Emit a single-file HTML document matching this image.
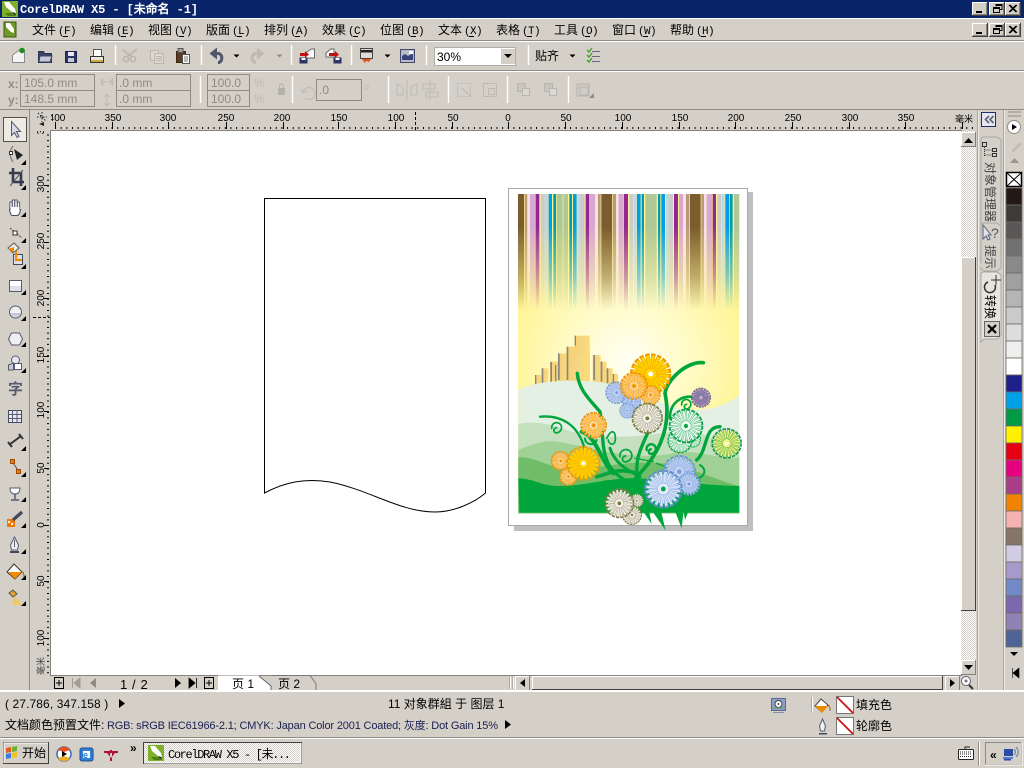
<!DOCTYPE html>
<html><head><meta charset="utf-8"><title>CorelDRAW X5</title>
<style>
html,body{margin:0;padding:0;width:1024px;height:768px;overflow:hidden;background:#d4d0c8}
svg{position:absolute;left:0;top:0;display:block}
text{font-family:"Liberation Sans","WenQuanYi Zen Hei","Noto Sans CJK SC",sans-serif;font-size:12px;fill:#000}
.m{font-family:"Liberation Mono","WenQuanYi Zen Hei",monospace;font-size:11px;letter-spacing:-.6px}
.t{font-family:"Liberation Mono","WenQuanYi Zen Hei",monospace;font-size:12px;font-weight:bold;fill:#fff}
.r{font-size:10px;text-anchor:middle}
.g{fill:#8f8c85;font-size:12px}
.fl-o{--p:#ffc04a;--e:#ee8e0c;--c:#f08a00;--g:#fff6e0}
.fl-y{--p:#ffd400;--e:#f09c00;--c:#fff;--g:#ffd400}
.fl-b{--p:#b4c9f0;--e:#7297d6;--c:#7d9ad8;--g:#dfe8fa}
.fl-l{--p:#d6e4fb;--e:#6690d0;--c:#00a040;--g:#f2f6ff}
.fl-t{--p:#f4ece6;--e:#7c7c4a;--c:#6d7a3a;--g:#fff}
.fl-p{--p:#9c8bb4;--e:#66588a;--c:#cfc6dc;--g:#9c8bb4}
.fl-g{--p:#eefaf0;--e:#0aa34a;--c:#0aa34a;--g:#fff}
.fl-v{--p:#f2f07a;--e:#129a48;--c:#fff;--g:#f2f07a}
</style></head><body>
<svg width="1024" height="768" viewBox="0 0 1024 768" xmlns="http://www.w3.org/2000/svg">
<defs>
<pattern id="ck" width="2" height="2" patternUnits="userSpaceOnUse"><rect width="2" height="2" fill="#fff"/><rect width="1" height="1" fill="#d4d0c8"/><rect x="1" y="1" width="1" height="1" fill="#d4d0c8"/></pattern>
<g id="wb"><rect width="16" height="14" fill="#404040"/><rect width="15" height="13" fill="#fff"/><rect x="1" y="1" width="14" height="12" fill="#808080"/><rect x="1" y="1" width="13" height="11" fill="#d4d0c8"/></g>
<g id="b15"><rect width="15" height="15" fill="#808080"/><rect width="14" height="14" fill="#fff"/><rect x="1" y="1" width="13" height="13" fill="#d4d0c8"/></g>
<path id="tr" d="M5 0V5H0Z" fill="#000"/>
<g id="logo"><rect width="16" height="16" fill="#7fb02c"/><path d="M2 1h5l6 7 1 4-4-1-6-5z" fill="#fff"/><path d="M3 12l3 3h8v-3z" fill="#4f7f16"/><path d="M10 11l3 1 0 2z" fill="#222"/></g>
<radialGradient id="sky" gradientUnits="userSpaceOnUse" cx="628" cy="360" r="130"><stop offset="0" stop-color="#fffff4"/><stop offset=".45" stop-color="#fffbc8"/><stop offset="1" stop-color="#fff38e"/></radialGradient>
<linearGradient id="fade" gradientUnits="userSpaceOnUse" x1="0" y1="194" x2="0" y2="310"><stop offset="0" stop-color="#fff"/><stop offset=".28" stop-color="#fff"/><stop offset=".72" stop-color="#777"/><stop offset="1" stop-color="#000"/></linearGradient>
<mask id="fm" maskUnits="userSpaceOnUse" x="500" y="180" width="260" height="140"><rect x="500" y="180" width="260" height="140" fill="url(#fade)"/></mask>
<linearGradient id="bld" x1="0" x2="1" y1="0" y2="0"><stop offset="0" stop-color="#f6d170"/><stop offset=".5" stop-color="#f3d688"/><stop offset="1" stop-color="#ffdd70"/></linearGradient>
<g id="fl">
<circle r="38" style="fill:var(--g)"/>
<circle r="32" fill="none" stroke-width="36" pathLength="100" stroke-dasharray="3.8 1.2" style="stroke:var(--e)"/>
<circle r="30" fill="none" stroke-width="29" pathLength="100" stroke-dasharray="2.6 2.4" stroke-dashoffset="-.6" style="stroke:var(--p)"/>
<circle r="11" style="fill:var(--p)"/>
<circle r="6" style="fill:var(--c)"/>
</g>
<clipPath id="art"><rect x="500" y="180" width="260" height="360"/></clipPath>
<clipPath id="vr"><rect x="30" y="131" width="21" height="544"/></clipPath>
<clipPath id="hr"><rect x="51" y="110" width="925" height="21"/></clipPath>
</defs>

<!-- background -->
<rect width="1024" height="768" fill="#d4d0c8"/>

<!-- title bar -->
<rect width="1024" height="18" fill="#0a246a"/>
<use href="#logo" x="2" y="1"/>
<text class="t" x="20" y="13" textLength="178">CorelDRAW X5 - [未命名 -1]</text>
<use href="#wb" x="972" y="2"/><use href="#wb" x="989" y="2"/><use href="#wb" x="1005" y="2"/>
<use href="#wb" x="972" y="23"/><use href="#wb" x="989" y="23"/><use href="#wb" x="1005" y="23"/>
<g fill="none" stroke="#000">
<path d="M976 11.5h6M976 12.5h6M976 32.5h6M976 33.5h6"/>
<path d="M996 6.5v-2h6v5h-2M996 5.5h6M993.5 7.5h6v5h-6zM993.5 8.5h6"/>
<path d="M996 27.5v-2h6v5h-2M996 26.5h6M993.5 28.5h6v5h-6zM993.5 29.5h6"/>
<path d="M1009 5l7 7M1010 5l7 7M1016 5l-7 7M1017 5l-7 7"/>
<path d="M1009 26l7 7M1010 26l7 7M1016 26l-7 7M1017 26l-7 7"/>
</g>
<rect y="18" width="1024" height="1" fill="#fff"/>

<!-- menu -->
<g transform="translate(4,22)"><rect width="12" height="15" fill="#6f9a2a" stroke="#3c5a14"/><path d="M2 1h4l4 6 0 4-3-1-5-5z" fill="#fff"/></g>
<g>
<text x="32" y="34">文件<tspan class="m" x="58">(F)</tspan></text>
<text x="90" y="34">编辑<tspan class="m" x="116">(E)</tspan></text>
<text x="148" y="34">视图<tspan class="m" x="174">(V)</tspan></text>
<text x="206" y="34">版面<tspan class="m" x="232">(L)</tspan></text>
<text x="264" y="34">排列<tspan class="m" x="290">(A)</tspan></text>
<text x="322" y="34">效果<tspan class="m" x="348">(C)</tspan></text>
<text x="380" y="34">位图<tspan class="m" x="406">(B)</tspan></text>
<text x="438" y="34">文本<tspan class="m" x="464">(X)</tspan></text>
<text x="496" y="34">表格<tspan class="m" x="522">(T)</tspan></text>
<text x="554" y="34">工具<tspan class="m" x="580">(O)</tspan></text>
<text x="612" y="34">窗口<tspan class="m" x="638">(W)</tspan></text>
<text x="670" y="34">帮助<tspan class="m" x="696">(H)</tspan></text>
</g>
<path d="M63 36.500h5M121 36.500h5M179 36.500h5M237 36.500h5M295 36.500h5M353 36.500h5M411 36.500h5M469 36.500h5M527 36.500h5M585 36.500h5M643 36.500h5M701 36.500h5" stroke="#000"/>
<rect y="40" width="1024" height="1" fill="#8e8b84"/><rect y="41" width="1024" height="1" fill="#fff"/>
<rect y="70" width="1024" height="1" fill="#8e8b84"/><rect y="71" width="1024" height="1" fill="#fff"/>
<rect y="109" width="1024" height="1" fill="#8e8b84"/>

<!-- toolbar separators -->
<path d="M115.500 45v20M201.500 45v20M291.500 45v20M351.500 45v20M426.500 45v20M528.500 45v20" stroke="#fff" stroke-width="1.400"/>
<path d="M200.500 76v27M292.500 76v27M388.500 76v27M448.500 76v27M507.500 76v27M568.500 76v27" stroke="#fff" stroke-width="1.400"/>

<!-- main toolbar icons -->
<path d="M12.500 55l7-5h5v12.500h-12z" fill="#f4f4f4" stroke="#8a8a8a"/><circle cx="22" cy="50.500" r="2.800" fill="#1f8f1f"/>
<path d="M38.500 51.500h5l1 2h7v9h-13z" fill="#3d4468" stroke="#2c3252"/><path d="M40 56h12l-2 6h-11z" fill="#c6cad8" stroke="#3d4468"/>
<rect x="65.500" y="51.500" width="11" height="11" fill="#2c3468" stroke="#20254c"/><rect x="68" y="52" width="6" height="4" fill="#e8e8f0"/><rect x="68" y="58" width="6" height="4" fill="#c8cad8"/>
<rect x="93.500" y="49.500" width="8" height="7" fill="#fff" stroke="#555"/><rect x="90.500" y="56.500" width="13" height="6" fill="#e8e4d8" stroke="#333"/><rect x="91" y="60" width="12" height="2" fill="#c9a940"/>
<g stroke="#b8b4ac" fill="none" stroke-width="1.500"><circle cx="126" cy="59" r="2.600"/><circle cx="133" cy="59" r="2.600"/><path d="M127 57l10-8M132 57l-9-7"/></g>
<g stroke="#bbb7af" fill="#dcd9d2"><rect x="150.500" y="50.500" width="8" height="10"/><rect x="154.500" y="53.500" width="9" height="10"/></g>
<path d="M156 56.500h6M156 58.500h6M156 60.500h6" stroke="#bbb7af"/>
<rect x="176.500" y="51.500" width="9" height="11" fill="#5b3c22" stroke="#3a2712"/><rect x="178" y="48.500" width="5" height="4" fill="#9aa0a0" stroke="#555"/><rect x="182.500" y="54.500" width="7" height="9" fill="#fff" stroke="#555"/><path d="M184 57h4M184 59h4M184 61h4" stroke="#777"/>
<path d="M216 53.500h3a5 5 0 0 1 0 9h-1" fill="none" stroke="#50566c" stroke-width="3"/><path d="M217 47.500v12l-7.500-6z" fill="#50566c"/>
<path d="M233.500 54.500h6l-3 3z" fill="#000"/>
<path d="M258 53.500h-3a5 5 0 0 0 0 9h1" fill="none" stroke="#bdbab3" stroke-width="3"/><path d="M257 47.500v12l7.500-6z" fill="#bdbab3"/>
<path d="M276.500 54.500h6l-3 3z" fill="#8f8c85"/>
<!-- import / export -->
<path d="M305.500 53l6-4h3v9h-9z" fill="#fff" stroke="#666"/><rect x="299.500" y="57.500" width="8" height="6" fill="#2c3468"/><rect x="301.500" y="58" width="4" height="2" fill="#fff"/><path d="M300 53h5v-2l4 3.500-4 3.500v-2h-5z" fill="#c21010"/>
<path d="M326 53l5-4h3v8h-8z" fill="#fff" stroke="#666"/><rect x="333.500" y="57.500" width="8" height="6" fill="#2c3468"/><rect x="335.500" y="58" width="4" height="2" fill="#fff"/><path d="M329 53h6v-2l4 3.500-4 3.500v-2h-6z" fill="#c21010"/>
<rect x="360.500" y="48.500" width="12" height="10" fill="#dfdcd4" stroke="#444"/><rect x="361" y="50" width="11" height="2.500" fill="#222"/><path d="M362 59h9l-2 3-2.500-1-2 2-1-2z" fill="#e8501a"/>
<path d="M384.500 54.500h6l-3 3z" fill="#000"/>
<rect x="400.500" y="49.500" width="14" height="13" fill="#b8bcc8" stroke="#404868"/><path d="M402 60v-4l3-2 3 2 5-3v7z" fill="#39437a"/><rect x="409" y="51" width="4" height="3" fill="#fff"/>
<!-- combo -->
<rect x="434.500" y="47.500" width="81" height="18" fill="#fff" stroke="#b0ada5"/>
<text x="437" y="61" font-size="12">30%</text>
<rect x="501" y="49" width="14" height="15" fill="#d4d0c8"/><path d="M504 54h8l-4 4z" fill="#000"/>
<text x="535" y="60" font-size="12">贴齐</text>
<path d="M569.500 54.500h6l-3 3z" fill="#000"/>
<path d="M592 51.500h8M592 56.500h8M592 61.500h8" stroke="#6a6688"/><path d="M587 50l2 2 3-4M587 55l2 2 3-4M587 60l2 2 3-4" fill="none" stroke="#3aa020" stroke-width="1.300"/>

<!-- property bar -->
<text x="8" y="88" font-weight="bold" class="g">x:</text><text x="8" y="104" font-weight="bold" class="g">y:</text>
<g fill="none" stroke="#8e8b84"><rect x="20.500" y="74.500" width="74" height="16"/><rect x="20.500" y="90.500" width="74" height="16"/><rect x="116.500" y="74.500" width="74" height="16"/><rect x="116.500" y="90.500" width="74" height="16"/><rect x="207.500" y="74.500" width="42" height="16"/><rect x="207.500" y="90.500" width="42" height="16"/><rect x="316.500" y="79.500" width="45" height="21"/></g>
<text x="24" y="87" class="g">105.0 mm</text><text x="24" y="103" class="g">148.5 mm</text>
<text x="119" y="87" class="g">.0 mm</text><text x="119" y="103" class="g">.0 mm</text>
<text x="211" y="87" class="g">100.0</text><text x="211" y="103" class="g">100.0</text>
<text x="319" y="94" class="g">.0</text>
<text x="254" y="87" style="fill:#bdbab3">%</text><text x="254" y="103" style="fill:#bdbab3">%</text>
<text x="364" y="90" style="fill:#bdbab3;font-size:9px">o</text>
<g fill="none" stroke="#bdbab3">
<path d="M102 82h10M104 79l-3 3 3 3M110 79l3 3-3 3M101.500 78v8M112.500 78v8"/>
<path d="M107 95v10M104 97l3-3 3 3M104 103l3 3 3-3"/>
<path d="M303 93a6 6 0 1 1 2 5M301 89l2 4 4-2"/>
<path d="M397 84v11h6v-8zM417 84v11h-6v-8zM407 80v20"/>
<path d="M423 84h12v5h-12zM426 92h12v5h-12zM430 80v20"/>
<rect x="457.500" y="83.500" width="13" height="13" stroke-dasharray="2 1"/><path d="M462 88l8 8"/>
<rect x="483.500" y="83.500" width="13" height="13"/><rect x="488.500" y="88.500" width="6" height="6"/>
</g>
<rect x="278" y="88" width="7" height="7" fill="#b5b2ab"/><path d="M279.500 88v-2a2 2 0 0 1 4 0v2" fill="none" stroke="#b5b2ab"/>
<g fill="#c9c6bf" stroke="#b8b5ae"><rect x="517.500" y="83.500" width="8" height="8"/><rect x="522.500" y="88.500" width="7" height="7" fill="#dcd9d2"/><rect x="544.500" y="83.500" width="8" height="8"/><rect x="549.500" y="88.500" width="7" height="7" fill="#dcd9d2"/></g>
<path d="M577 84h12v12h-12zM580 87h8v8h-8z" fill="#cfccc5" stroke="#b8b5ae"/><path d="M594 98h-5l5-5z" fill="#8e8b84"/>

<!-- ruler h -->
<rect x="30" y="110" width="946" height="21" fill="#d4d0c8"/>
<path d="M55 128H973" stroke="#000" stroke-width="2" stroke-dasharray="1 4.66"/>
<path d="M55.500 122v7M112.500 122v7M168.500 122v7M226.500 122v7M283.500 122v7M338.500 122v7M395.500 122v7M452.500 122v7M508.500 122v7M565.500 122v7M622.500 122v7M679.500 122v7M735.500 122v7M792.500 122v7M849.500 122v7M905.500 122v7M962.500 122v7" stroke="#000"/>
<path d="M415.500 112v18" stroke="#000" stroke-dasharray="3 2"/>
<g clip-path="url(#hr)">
<text class="r" x="57" y="121">400</text><text class="r" x="113" y="121">350</text><text class="r" x="168" y="121">300</text><text class="r" x="226" y="121">250</text><text class="r" x="282" y="121">200</text><text class="r" x="339" y="121">150</text><text class="r" x="396" y="121">100</text><text class="r" x="453" y="121">50</text><text class="r" x="508" y="121">0</text>
<text class="r" x="566" y="121">50</text><text class="r" x="623" y="121">100</text><text class="r" x="680" y="121">150</text><text class="r" x="736" y="121">200</text><text class="r" x="793" y="121">250</text><text class="r" x="850" y="121">300</text><text class="r" x="906" y="121">350</text>
<text x="955" y="122" style="font-size:9px">毫米</text>
</g>
<path d="M37 117h10M42 112v10M38 113l8 8" stroke="#222" stroke-dasharray="1.500 1.500" fill="none"/><path d="M39 124l5-2v4z" fill="#222"/>

<!-- ruler v -->
<g clip-path="url(#vr)">
<path d="M48 134.500V675" stroke="#000" stroke-width="2" stroke-dasharray="1 4.66"/>
<path d="M44 185.500h5M44 242.500h5M44 298.500h5M44 356.500h5M44 411.500h5M44 468.500h5M44 525.500h5M44 581.500h5M44 638.500h5" stroke="#000"/>
<g>
<text class="r" transform="translate(44,126) rotate(-90)">350</text>
<text class="r" transform="translate(44,184) rotate(-90)">300</text>
<text class="r" transform="translate(44,241) rotate(-90)">250</text>
<text class="r" transform="translate(44,298) rotate(-90)">200</text>
<text class="r" transform="translate(44,355) rotate(-90)">150</text>
<text class="r" transform="translate(44,410) rotate(-90)">100</text>
<text class="r" transform="translate(44,468) rotate(-90)">50</text>
<text class="r" transform="translate(44,525) rotate(-90)">0</text>
<text class="r" transform="translate(44,581) rotate(-90)">50</text>
<text class="r" transform="translate(44,638) rotate(-90)">100</text>
<text transform="translate(44,675) rotate(-90)" style="font-size:9px;fill:#444">毫米</text>
</g>
</g>
<path d="M33 317.500H50" stroke="#000" stroke-dasharray="3 2"/>

<!-- canvas -->
<rect x="50.500" y="130.500" width="911" height="545" fill="#fff" stroke="#85827b"/>

<!-- toolbox -->
<rect x="29" y="110" width="1" height="580" fill="#8e8b84"/>
<rect x="3.500" y="117.500" width="23" height="24" fill="#eeebe4" stroke="#55524c"/>
<path d="M11.500 121.500l0 14 3-3 2.500 5 2-1-2.500-5h4z" fill="#d8dce8" stroke="#555a70"/>
<!-- shape -->
<path d="M13 146c-4 5-4 10 0 16" fill="none" stroke="#777" stroke-width="1.200"/><rect x="9.500" y="151.500" width="3" height="3" fill="#fff" stroke="#333"/><path d="M14 149l9 6-6 5z" fill="#222"/>
<use href="#tr" x="21" y="160"/>
<!-- crop -->
<path d="M9 173h12v13M13 168v14h11" fill="none" stroke="#343a50" stroke-width="2.600"/><path d="M10 186l13-16" stroke="#555" stroke-width="1"/>
<use href="#tr" x="21" y="185"/>
<!-- hand -->
<path d="M11 208v-5M13.500 207v-6M16 207v-6M18.500 208v-5" stroke="#444a5e" stroke-width="3.200" stroke-linecap="round" fill="none"/>
<path d="M9.500 209.500h11l-1 4q-1 2-3 2h-4q-2 0-3-6z" fill="#fff" stroke="#444a5e"/>
<path d="M11 208v-5M13.500 207v-6M16 207v-6M18.500 208v-5" stroke="#fff" stroke-width="1.400" stroke-linecap="round" fill="none"/><rect x="10.500" y="207" width="9" height="4" fill="#fff"/>
<use href="#tr" x="21" y="212"/>
<!-- curve -->
<path d="M10 228l12 10" stroke="#444" stroke-dasharray="2 1"/><rect x="13" y="231" width="4" height="4" fill="#fff" stroke="#333"/>
<use href="#tr" x="21" y="238"/>
<!-- smart fill -->
<path d="M8 248l6-5 5 5-6 5z" fill="#eee" stroke="#555"/><path d="M8 249l6-2 0 6z" fill="#f08a00"/><rect x="13.500" y="254.500" width="9" height="10" fill="#e0e0e8" stroke="#444a5e"/><path d="M16 251v9h6" fill="none" stroke="#f08a00" stroke-width="2"/>
<use href="#tr" x="21" y="264"/>
<!-- rect -->
<rect x="9.500" y="280.500" width="12" height="11" fill="#dfe1ea" stroke="#555a70"/><rect x="10" y="281" width="11" height="5" fill="#fff"/>
<use href="#tr" x="21" y="290"/>
<!-- ellipse -->
<circle cx="15.500" cy="312" r="6" fill="#f0f1f5" stroke="#555a70"/><path d="M10 313a6 6 0 0 0 11 0z" fill="#c8cad8"/>
<use href="#tr" x="21" y="316"/>
<!-- polygon -->
<path d="M11.500 333h8l3 6-3 6h-8l-3-6z" fill="#eeeff4" stroke="#555a70"/>
<use href="#tr" x="21" y="342"/>
<!-- basic shapes -->
<circle cx="15.500" cy="360" r="4" fill="#e8e9f0" stroke="#555a70"/><rect x="14.500" y="363.500" width="7" height="6" fill="#fff" stroke="#555a70"/><path d="M8.500 365l5-2v7h-5z" fill="#c8cad8" stroke="#555a70"/>
<use href="#tr" x="21" y="368"/>
<!-- text -->
<text x="8" y="394" style="font-size:15px;font-weight:bold;fill:#555a70">字</text>
<!-- table -->
<rect x="8.500" y="410.500" width="13" height="12" fill="#e8e8f4" stroke="#444a5e"/><path d="M8.500 414.500h13M8.500 418.500h13M12.500 410v12M17 410v12" stroke="#555a70"/>
<!-- dimension -->
<path d="M9 445l12-9" stroke="#333" stroke-width="2"/><path d="M8 442l4 5M19 434l4 5" stroke="#333" stroke-width="2"/>
<use href="#tr" x="21" y="446"/>
<!-- connector -->
<rect x="10.500" y="459.500" width="4" height="4" fill="#f07a00" stroke="#a04a00"/><rect x="16.500" y="469.500" width="4" height="4" fill="#f07a00" stroke="#a04a00"/><path d="M13 463l5 7" stroke="#555"/>
<use href="#tr" x="21" y="472"/>
<!-- blend -->
<path d="M10 488h10c0 4-2 6-5 6s-5-2-5-6z" fill="#fff" stroke="#555a70"/><path d="M15 494v5M11 500h8" stroke="#555a70" stroke-width="1.500"/>
<use href="#tr" x="21" y="497"/>
<!-- eyedropper -->
<rect x="7" y="519" width="8" height="8" fill="#f07a00"/><path d="M8 521h2v2h-2zM11 523h2v2h-2z" fill="#fff"/><path d="M13 520l9-8" stroke="#444a5e" stroke-width="3.200"/>
<use href="#tr" x="21" y="523"/>
<!-- pen -->
<path d="M14.500 537l4 8-1 5h-6l-1-5z" fill="#f0f0f4" stroke="#555a70"/><path d="M14.500 540v7" stroke="#555a70"/><rect x="10" y="551" width="9" height="2" fill="#444a5e"/>
<use href="#tr" x="21" y="549"/>
<!-- fill -->
<path d="M7 572l7-8 8 8-7 7z" fill="#fff" stroke="#333"/><path d="M8 572l14 0-7 7z" fill="#f08a00"/><path d="M21 571c3 1 3 4 3 6" fill="none" stroke="#a06000"/>
<use href="#tr" x="21" y="575"/>
<!-- interactive -->
<path d="M9 593l4-3 4 4-4 3z" fill="#f0a030" stroke="#555"/><path d="M15 596l7 9h-10z" fill="#f2c860"/>
<use href="#tr" x="21" y="601"/>

<!-- page outline shape -->
<path d="M264.500 198.500H485.500V493C475 502 455 512 435 512C400 512 370 490 330 482C305 478 285 482 264.500 493Z" fill="#fff" stroke="#000"/>

<!-- artwork page -->
<rect x="514" y="192" width="239" height="339" fill="#bfbfbf"/>
<rect x="508.500" y="188.500" width="239" height="337" fill="#fff" stroke="#a8a8a8"/>
<rect x="518" y="194" width="221" height="318" fill="url(#sky)"/>
<!-- stripes -->
<g mask="url(#fm)"><g transform="translate(500,180) scale(.3333)">
<g fill="#7b5c2e"><rect x="54" y="42" width="18" height="360"/><rect x="304" y="42" width="32" height="360"/><rect x="570" y="42" width="32" height="360"/></g>
<g fill="#b8997a"><rect x="74" y="42" width="8" height="360"/><rect x="294" y="42" width="8" height="360"/><rect x="338" y="42" width="10" height="360"/><rect x="558" y="42" width="10" height="360"/><rect x="604" y="42" width="8" height="360"/></g>
<g fill="#f7dfe8"><rect x="82" y="42" width="8" height="360"/><rect x="286" y="42" width="8" height="360"/><rect x="348" y="42" width="8" height="360"/><rect x="549" y="42" width="9" height="360"/><rect x="612" y="42" width="8" height="360"/></g>
<g fill="#d9a8d0"><rect x="90" y="42" width="16" height="360"/><rect x="270" y="42" width="15" height="360"/><rect x="356" y="42" width="15" height="360"/><rect x="537" y="42" width="12" height="360"/><rect x="620" y="42" width="16" height="360"/></g>
<g fill="#92288f"><rect x="107" y="42" width="11" height="360"/><rect x="257" y="42" width="11" height="360"/><rect x="372" y="42" width="12" height="360"/><rect x="522" y="42" width="12" height="360"/><rect x="638" y="42" width="10" height="360"/></g>
<g fill="#cbcbcb"><rect x="122" y="42" width="12" height="360"/><rect x="240" y="42" width="14" height="360"/><rect x="388" y="42" width="12" height="360"/><rect x="506" y="42" width="13" height="360"/><rect x="652" y="42" width="12" height="360"/></g>
<g fill="#bcd8e4"><rect x="134" y="42" width="11" height="360"/><rect x="232" y="42" width="8" height="360"/><rect x="402" y="42" width="8" height="360"/><rect x="498" y="42" width="8" height="360"/><rect x="666" y="42" width="8" height="360"/></g>
<g fill="#009fe3"><rect x="146" y="42" width="10" height="360"/><rect x="219" y="42" width="11" height="360"/><rect x="411" y="42" width="11" height="360"/><rect x="484" y="42" width="11" height="360"/><rect x="676" y="42" width="12" height="360"/></g>
<g fill="#0099b4"><rect x="160" y="42" width="8" height="360"/><rect x="208" y="42" width="8" height="360"/><rect x="425" y="42" width="7" height="360"/><rect x="474" y="42" width="7" height="360"/><rect x="690" y="42" width="8" height="360"/></g>
<g fill="#afc896"><rect x="170" y="42" width="18" height="360"/><rect x="190" y="42" width="14" height="360"/><rect x="436" y="42" width="34" height="360"/><rect x="702" y="42" width="16" height="360"/></g>
</g></g>

<!-- lower art -->
<g clip-path="url(#art)"><g transform="translate(500,350) scale(.3333)">
<!-- city -->
<g fill="url(#bld)">
<rect x="105" y="75" width="20" height="30"/><rect x="125" y="55" width="20" height="50"/><rect x="150" y="35" width="25" height="70"/><rect x="175" y="10" width="28" height="95"/><rect x="200" y="-10" width="70" height="115"/><rect x="278" y="15" width="24" height="90"/><rect x="302" y="35" width="18" height="70"/><rect x="320" y="55" width="18" height="50"/><rect x="338" y="72" width="16" height="33"/>
</g>
<rect x="224" y="-43" width="45" height="60" fill="url(#bld)"/>
<g fill="#8a857a"><rect x="105" y="75" width="4" height="28"/><rect x="125" y="55" width="5" height="48"/><rect x="151" y="36" width="5" height="60"/><rect x="165" y="45" width="4" height="50"/><rect x="174" y="10" width="5" height="80"/><rect x="200" y="-10" width="5" height="100"/><rect x="224" y="-43" width="4" height="30"/><rect x="280" y="15" width="5" height="75"/><rect x="302" y="35" width="5" height="60"/><rect x="320" y="55" width="5" height="45"/><rect x="338" y="72" width="4" height="28"/></g>
<!-- hills -->
<path d="M55 118C120 90 230 85 320 100C430 122 500 185 600 180C650 175 690 160 718 135V490H55Z" fill="#e4f0e4"/>
<path d="M55 222C100 212 150 222 200 240C300 272 420 260 520 245C610 232 670 290 718 290V490H55Z" fill="#c4e0be"/>
<path d="M55 300C100 282 130 270 170 275C270 290 390 335 520 310C600 295 670 335 718 322V490H55Z" fill="#a0d196"/>
<path d="M55 322C100 318 140 350 200 356C290 360 350 335 450 338C560 340 640 390 718 408V490H55Z" fill="#6fbd68"/>
<path d="M55 385C100 385 120 408 180 408C260 408 340 380 420 385C520 392 600 405 718 408V488H58Z" fill="#00a63c"/>
<!-- stems -->
<g fill="none" stroke="#00a63c" stroke-linecap="round">
<path d="M232 70C236 120 270 150 300 185C312 240 300 300 330 350C350 380 390 400 420 420" stroke-width="10"/>
<path d="M120 200C180 195 235 220 255 300" stroke-width="7"/>
<path d="M245 245C290 260 300 330 340 370" stroke-width="12"/>
<path d="M610 38C560 33 500 90 495 130C512 210 495 290 420 370C405 385 400 395 395 410" stroke-width="11"/>
<path d="M510 205C508 150 560 130 590 145" stroke-width="8"/>
<path d="M590 330C625 300 610 230 660 230" stroke-width="10"/>
<path d="M445 245C425 290 400 330 415 395" stroke-width="10"/>
<path d="M330 295C345 340 380 360 420 380" stroke-width="9"/>
<path d="M290 380C320 375 350 350 410 370" stroke-width="11"/>
<path d="M600 345C625 360 610 385 590 385" stroke-width="6"/>
<path d="M470 340L600 390M405 325L460 335" stroke-width="4"/>
<!-- spirals -->
<path d="M155 235a15 15 0 1 1 20 12a8 8 0 1 1 -5 -14" stroke-width="5"/>
<path d="M360 320a18 18 0 1 1 22 14a9 9 0 1 1 -5 -16" stroke-width="5"/>
<path d="M320 265c20 -40 30 -10 25 10c-5 15-20 5-20-5" stroke-width="5"/>
<path d="M255 265c0 20 30 25 35 5" stroke-width="6"/>
<path d="M440 300a14 14 0 1 1 18 10a7 7 0 1 1 -5 -12" stroke-width="7"/>
<path d="M545 165a14 14 0 1 1 20 10a7 7 0 1 1 -5 -12" stroke-width="5"/>
<path d="M305 400a14 7 0 1 1 30 0" stroke-width="4"/>
</g>
<path d="M400 400L497 542L480 470L430 400ZM420 470L455 522L445 470ZM520 470L545 535L550 490ZM550 480L555 510L565 485Z" fill="#00a63c"/>
<!-- flowers -->
<use href="#fl" class="fl-b" transform="translate(350,128) scale(.68)"/>
<use href="#fl" class="fl-b" transform="translate(395,155) scale(.56)"/>
<use href="#fl" class="fl-b" transform="translate(382,182) scale(.48)"/>
<use href="#fl" class="fl-y" transform="translate(452,72) scale(1.240)"/>
<use href="#fl" class="fl-o" transform="translate(452,135) scale(.6)"/>
<use href="#fl" class="fl-o" transform="translate(402,108) scale(.84)"/>
<use href="#fl" class="fl-t" transform="translate(442,205) scale(.94)"/>
<use href="#fl" class="fl-p" transform="translate(603,143) scale(.6)"/>
<use href="#fl" class="fl-g" transform="translate(578,268) scale(.5)"/>
<use href="#fl" class="fl-g" transform="translate(540,272) scale(.76)"/>
<use href="#fl" class="fl-g" transform="translate(558,228) scale(1.040)"/>
<use href="#fl" class="fl-v" transform="translate(680,280) scale(.92)"/>
<use href="#fl" class="fl-o" transform="translate(281,226) scale(.8)"/>
<use href="#fl" class="fl-o" transform="translate(182,333) scale(.6)"/>
<use href="#fl" class="fl-o" transform="translate(205,380) scale(.56)"/>
<use href="#fl" class="fl-y" transform="translate(250,340) scale(1.040)"/>
<use href="#fl" class="fl-b" transform="translate(538,365) scale(1)"/>
<use href="#fl" class="fl-b" transform="translate(567,402) scale(.7)"/>
<use href="#fl" class="fl-l" transform="translate(490,417) scale(1.160)"/>
<use href="#fl" class="fl-t" transform="translate(410,452) scale(.44)"/>
<use href="#fl" class="fl-t" transform="translate(396,495) scale(.6)"/>
<use href="#fl" class="fl-t" transform="translate(358,460) scale(.9)"/>
</g></g>

<!-- v scrollbar -->
<rect x="961" y="131" width="15" height="544" fill="url(#ck)"/>
<use href="#b15" x="961" y="132"/><path d="M964 143h9l-4.500-5z" fill="#000"/>
<rect x="961" y="257" width="15" height="353" fill="#d4d0c8"/>
<path d="M961.500 610V257.500H975" fill="none" stroke="#fff"/><path d="M961 610.500h15M975.500 257V611" stroke="#404040"/>
<use href="#b15" x="961" y="660"/><path d="M964 665h9l-4.500 5z" fill="#000"/>
<!-- zoom icon -->
<circle cx="966" cy="681" r="4.500" fill="#fff" stroke="#5a6078"/><circle cx="966" cy="681" r="1.500" fill="#777"/><path d="M969 685l4 4" stroke="#333" stroke-width="2"/>

<!-- page nav row -->
<rect x="51" y="676" width="909" height="15" fill="#d4d0c8"/>
<rect x="54.500" y="677.500" width="9" height="11" fill="none" stroke="#000"/><path d="M56 683h6M59 680v6" stroke="#000"/>
<path d="M72.500 678v10M80 678l-6 5 6 5z" fill="#a09d96" stroke="#a09d96"/>
<path d="M96 678l-6 5 6 5z" fill="#8e8b84"/>
<text x="120" y="689" style="font-size:13px;letter-spacing:.6px">1 / 2</text>
<path d="M175 678l6 5-6 5z" fill="#000"/>
<path d="M189 678l6 5-6 5zM196.500 678v10" fill="#000" stroke="#000" stroke-width=".8"/>
<rect x="204.500" y="677.500" width="9" height="11" fill="none" stroke="#000"/><path d="M206 683h6M209 680v6" stroke="#000"/>
<path d="M218 675.500h41l12 10v5h-53z" fill="#fff"/><path d="M259 676l12 10v4" fill="none" stroke="#666"/>
<text x="232" y="688">页 1</text>
<path d="M272 675.500h38l6 8v7" fill="none" stroke="#777"/>
<text x="278" y="688">页 2</text>
<path d="M509.500 677v12M512.500 677v12" stroke="#aaa"/><path d="M510.500 677v12M513.500 677v12" stroke="#fff"/>
<use href="#b15" x="515" y="676"/><path d="M525 679v8l-5-4z" fill="#000"/>
<path d="M532.500 689V676.500H943" fill="none" stroke="#fff"/><path d="M532 689.500h411M942.500 676V690" stroke="#404040"/>
<use href="#b15" x="945" y="676"/><path d="M950 679v8l5-4z" fill="#000"/>

<!-- docker area -->
<path d="M977.500 110V690M1003.500 110V690" stroke="#aaa7a0"/><path d="M978.500 110V690M1004.500 110V690" stroke="#eceae4"/>
<rect x="981.500" y="112.500" width="14" height="14" fill="#e6e6ee" stroke="#1b2f70"/><path d="M989 116l-3.500 3.500 3.500 3.500M993.500 116l-3.500 3.500 3.500 3.500" fill="none" stroke="#5a6078" stroke-width="1.600"/>
<path d="M981 225V140q0-3 3-3h13l4 3v85" fill="#d4d0c8" stroke="#aaa7a0"/>
<g fill="none" stroke="#333"><rect x="982.500" y="142.500" width="4" height="4"/><rect x="992.500" y="148.500" width="4" height="3"/><rect x="992.500" y="153.500" width="4" height="3"/><path d="M984.500 147v10M984.500 150h8M984.500 155h8" stroke-dasharray="1 1"/></g>
<text transform="translate(986,162) rotate(90)" style="font-size:12px;fill:#444">对象管理器</text>
<path d="M981 263V226q0-3 3-3h13l4 3v42l-4 3H984q-3-1-3-4" fill="#d4d0c8" stroke="#aaa7a0"/>
<path d="M983 225v14l3-3 2 4 2-1-2-4h3z" fill="#e0e2ee" stroke="#5a6078"/><text x="991" y="238" style="font-size:14px;fill:#555">?</text>
<text transform="translate(986,245) rotate(90)" style="font-size:12px;fill:#444">提示</text>
<path d="M981 342V275q0-3 3-3h13l4 3v60l-4 4H984z" fill="#e6e4de" stroke="#aaa7a0"/>
<path d="M995 285a5.500 5.500 0 1 1-7-3" fill="none" stroke="#333" stroke-width="1.500"/><path d="M996 275v10M991 280h10" stroke="#333"/>
<text transform="translate(986,295) rotate(90)" style="font-size:12px;fill:#000">转换</text>
<rect x="984.500" y="321.500" width="15" height="15" fill="#d4d0c8" stroke="#666"/><path d="M988 325l8 8M996 325l-8 8" stroke="#000" stroke-width="2.200"/>

<!-- palette -->
<path d="M1008 112h13M1008 116h13" stroke="#8e8b84"/>
<circle cx="1014" cy="127" r="6.500" fill="#fff" stroke="#8e8b84"/><path d="M1012 124v6l5-3z" fill="#000"/>
<path d="M1012 150l8-8 2 2-8 8h-2z" fill="#c0bdb6"/>
<path d="M1010 163h9l-4.500-5z" fill="#9a978f"/>
<rect x="1006.500" y="172.500" width="15" height="14" fill="#fff" stroke="#000" stroke-width="1.500"/><path d="M1007 173l14 13M1021 173l-14 13" stroke="#000"/>
<g stroke="#6e6b66" stroke-width=".8">
<rect x="1006" y="188" width="16" height="17" fill="#231815"/>
<rect x="1006" y="205" width="16" height="17" fill="#3e3a39"/>
<rect x="1006" y="222" width="16" height="17" fill="#595757"/>
<rect x="1006" y="239" width="16" height="17" fill="#727171"/>
<rect x="1006" y="256" width="16" height="17" fill="#898989"/>
<rect x="1006" y="273" width="16" height="17" fill="#9fa0a0"/>
<rect x="1006" y="290" width="16" height="17" fill="#b5b5b6"/>
<rect x="1006" y="307" width="16" height="17" fill="#c9caca"/>
<rect x="1006" y="324" width="16" height="17" fill="#dcdddd"/>
<rect x="1006" y="341" width="16" height="17" fill="#efefef"/>
<rect x="1006" y="358" width="16" height="17" fill="#fff"/>
<rect x="1006" y="375" width="16" height="17" fill="#1d2088"/>
<rect x="1006" y="392" width="16" height="17" fill="#00a0e9"/>
<rect x="1006" y="409" width="16" height="17" fill="#009944"/>
<rect x="1006" y="426" width="16" height="17" fill="#fff100"/>
<rect x="1006" y="443" width="16" height="17" fill="#e60012"/>
<rect x="1006" y="460" width="16" height="17" fill="#e4007f"/>
<rect x="1006" y="477" width="16" height="17" fill="#a93d88"/>
<rect x="1006" y="494" width="16" height="17" fill="#f08300"/>
<rect x="1006" y="511" width="16" height="17" fill="#f5b2b2"/>
<rect x="1006" y="528" width="16" height="17" fill="#867567"/>
<rect x="1006" y="545" width="16" height="17" fill="#cfcce4"/>
<rect x="1006" y="562" width="16" height="17" fill="#a59aca"/>
<rect x="1006" y="579" width="16" height="17" fill="#7289c8"/>
<rect x="1006" y="596" width="16" height="17" fill="#7b68ae"/>
<rect x="1006" y="613" width="16" height="17" fill="#8f82b4"/>
<rect x="1006" y="630" width="16" height="17" fill="#4e6396"/>
</g>
<path d="M1010 652h8l-4 4z" fill="#000"/>
<path d="M1012.500 668v10M1019 668l-6 5 6 5z" fill="#000" stroke="#000" stroke-width=".6"/>

<!-- status -->
<rect y="690" width="1024" height="2" fill="#fff"/>
<text x="5" y="708" style="letter-spacing:.1px">( 27.786, 347.158 )</text>
<path d="M119 699l6 4.500-6 4.500z" fill="#000"/>
<text x="388" y="708">11 对象群組 于 图层 1</text>
<text x="5" y="729">文档颜色预置文件:</text>
<text x="107" y="729" textLength="391" style="font-size:11px;fill:#1a1f52">RGB: sRGB IEC61966-2.1; CMYK: Japan Color 2001 Coated; 灰度: Dot Gain 15%</text>
<path d="M505 720l6 4.500-6 4.500z" fill="#000"/>
<rect x="771.500" y="698.500" width="14" height="12" fill="#8aa0c8" stroke="#5a6a90"/><circle cx="778.500" cy="704" r="3.500" fill="#fff" stroke="#444"/><circle cx="778.500" cy="704" r="1" fill="#444"/><path d="M772 708h13" stroke="#6aa060"/><path d="M773 712.500h11" stroke="#8890a8"/>
<path d="M811.500 697v15" stroke="#aaa7a0"/><path d="M812.500 697v15" stroke="#fff"/>
<path d="M815 706l6-7 7 6-6 7z" fill="#fff" stroke="#444"/><path d="M815 706h13l-6 7z" fill="#f08a00"/><path d="M828 705c2 1 2 3 2 6" fill="none" stroke="#a06000"/>
<path d="M822.500 719l3 7-1 5h-4l-1-5z" fill="#f0f0f4" stroke="#555a70"/><rect x="819" y="733" width="8" height="1.500" fill="#444a5e"/>
<rect x="836.500" y="696.500" width="17" height="17" fill="#fff" stroke="#777"/><path d="M837 697l16 16" stroke="#cc1111" stroke-width="1.800"/>
<rect x="836.500" y="717.500" width="17" height="17" fill="#fff" stroke="#777"/><path d="M837 718l16 16" stroke="#cc1111" stroke-width="1.800"/>
<text x="856" y="709">填充色</text><text x="856" y="730">轮廓色</text>

<!-- taskbar -->
<rect y="737" width="1024" height="1" fill="#8e8b84"/><rect y="738" width="1024" height="1" fill="#fff"/>
<rect x="3.500" y="742.500" width="45" height="21" fill="#d4d0c8" stroke="#404040"/><path d="M4 763V743H48" fill="none" stroke="#fff"/>
<path d="M6 748l5-1v5l-5 1z" fill="#e85a20"/><path d="M12 747l5-1v5l-5 1z" fill="#6cb030"/><path d="M6 754l5-1v5l-5 1z" fill="#3a7ee0"/><path d="M12 753l5-1v5l-5 1z" fill="#f4c020"/>
<text x="22" y="757">开始</text>
<circle cx="64" cy="754" r="7" fill="#fff" stroke="#3a6ab0" stroke-width="1.500"/><path d="M58 750a7 7 0 0 1 12 0l-6 2z" fill="#e85020"/><path d="M58 758a7 7 0 0 0 12 0l-6-2z" fill="#f0b020"/><path d="M62 751v6l5-3z" fill="#000"/>
<rect x="80" y="748" width="13" height="13" rx="2" fill="#2e7fd8" stroke="#1d4d90"/><path d="M83 751h7v7h-7z" fill="#fff"/><text x="83" y="758" style="font-size:9px;fill:#2e7fd8;font-weight:bold">e</text>
<path d="M104 751h14v2h-14zM110 750h2v11h-2zM107 753l4 5 4-5z" fill="#b01030"/>
<text x="130" y="752" style="font-weight:bold">»</text>
<rect x="143.500" y="742.500" width="158" height="21" fill="url(#ck)" stroke="#404040"/><path d="M144 763H301V743" fill="none" stroke="#fff"/>
<use href="#logo" x="148" y="745"/>
<text x="168" y="758" textLength="123" style="font-family:'Liberation Mono','WenQuanYi Zen Hei',monospace;font-size:12px">CorelDRAW X5 - [未...</text>
<!-- keyboard -->
<rect x="958.500" y="749.500" width="15" height="10" rx="1" fill="#fff" stroke="#222"/><path d="M960 752h12M960 754h12M960 756.500h12" stroke="#222" stroke-dasharray="1 1"/><path d="M965 749v-2h5" fill="none" stroke="#222"/>
<path d="M978.500 742v24" stroke="#8e8b84"/><path d="M979.500 742v24" stroke="#fff"/>
<rect x="985.500" y="742.500" width="36" height="22" fill="none" stroke="#8e8b84"/><path d="M1022 742v23H985" fill="none" stroke="#fff"/>
<text x="990" y="759" style="font-weight:bold">«</text>
<rect x="1004" y="749" width="9" height="7" fill="#2b4aa8"/><rect x="1003" y="757" width="10" height="2" fill="#5a7ad0"/><rect x="1004" y="759" width="7" height="1.500" fill="#2b4aa8"/><path d="M1014 749c2 2 2 4 0 6M1016 747c3 3 3 7 0 10" fill="none" stroke="#6a7aa0"/>
</svg>
</body></html>
